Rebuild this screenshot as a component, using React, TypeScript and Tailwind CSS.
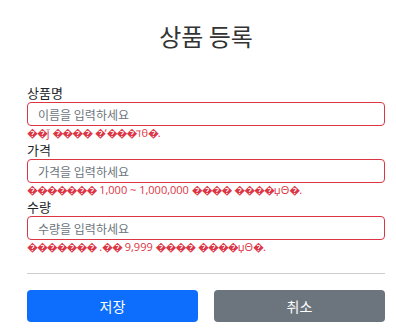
import React from 'react';

type Field = {
  id: string;
  label: string;
  placeholder: string;
  error: string;
};

const fields: Field[] = [
  {
    id: 'name',
    label: '상품명',
    placeholder: '이름을 입력하세요',
    error: '\uFFFD\uFFFDǰ \uFFFD\uFFFD\uFFFD\uFFFD \uFFFDʼ\uFFFD\uFFFD\uFFFDℸθ\uFFFD.',
  },
  {
    id: 'price',
    label: '가격',
    placeholder: '가격을 입력하세요',
    error:
      '\uFFFD\uFFFD\uFFFD\uFFFD\uFFFD\uFFFD\uFFFD 1,000 ~ 1,000,000 \uFFFD\uFFFD\uFFFD\uFFFD \uFFFD\uFFFD\uFFFD\uFFFDџΘ\uFFFD.',
  },
  {
    id: 'qty',
    label: '수량',
    placeholder: '수량을 입력하세요',
    error:
      '\uFFFD\uFFFD\uFFFD\uFFFD\uFFFD\uFFFD\uFFFD .\uFFFD\uFFFD 9,999 \uFFFD\uFFFD\uFFFD\uFFFD \uFFFD\uFFFD\uFFFD\uFFFDџΘ\uFFFD.',
  },
];

// the replacement glyphs sit a little tighter than the fallback font draws them
const renderError = (text: string) =>
  text.split(/(\uFFFD+)/).filter(Boolean).map((part, i) =>
    part.startsWith('\uFFFD') ? (
      <span key={i} className="tracking-[-1.1px]">
        {part}
      </span>
    ) : (
      <span key={i}>{part}</span>
    ),
  );

export default function App() {
  return (
    <div
      className="min-h-[336px] bg-white pl-[27px] pr-[11px] pt-[20px]"
      style={{ fontFamily: '"Noto Sans CJK KR", "Noto Sans", sans-serif' }}
    >
      <h1 className="text-center text-[24px] leading-[32px] font-normal text-[#333]">상품 등록</h1>

      <form className="mt-[31px]" onSubmit={e => e.preventDefault()}>
        {fields.map(field => (
          <div key={field.id}>
            <label htmlFor={field.id} className="block text-[13px] leading-[19px] text-[#212529]">
              {field.label}
            </label>
            <input
              id={field.id}
              placeholder={field.placeholder}
              className="block h-[24px] w-full rounded-[4px] border border-[#dc3545] px-[10px] text-[12px] text-[#212529] outline-none placeholder:text-[#6c757d]"
            />
            <div
              className="h-[14px] text-[11px] leading-[14px] whitespace-nowrap text-[#dc3545]"
              style={{ fontFamily: '"Open Sans", "Noto Sans CJK KR", sans-serif' }}
            >
              {renderError(field.error)}
            </div>
          </div>
        ))}

        <hr className="mt-[19px] border-t border-[#cccccc]" />

        <div className="mt-[16px] grid grid-cols-2 gap-[16px]">
          <button
            type="submit"
            className="h-[32px] rounded-[4px] bg-[#0d6efd] text-[14px] text-white"
          >
            저장
          </button>
          <button type="button" className="h-[32px] rounded-[4px] bg-[#6c757d] text-[14px] text-white">
            취소
          </button>
        </div>
      </form>
    </div>
  );
}
